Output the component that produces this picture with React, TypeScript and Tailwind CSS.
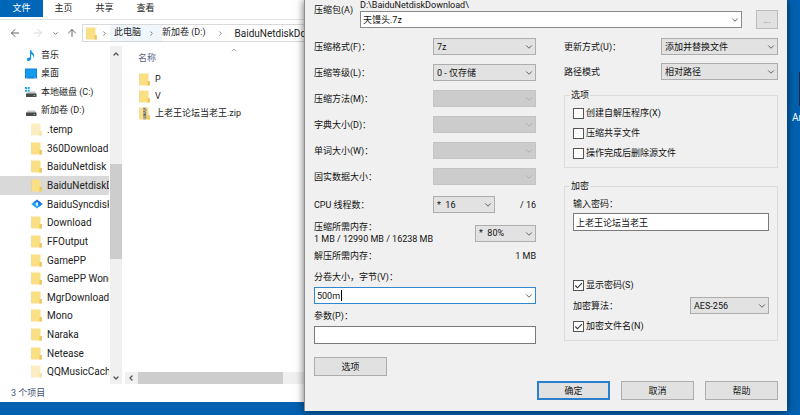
import { useState } from 'react';
import type { ReactNode } from 'react';
import { ArrowLeft, ArrowRight, ArrowUp, ChevronDown, ChevronLeft, ChevronRight, ChevronUp } from 'lucide-react';

const treeItems = [
  { name: '音乐', icon: 'music', level: 1 },
  { name: '桌面', icon: 'desktop', level: 1 },
  { name: '本地磁盘 (C:)', icon: 'system', level: 1 },
  { name: '新加卷 (D:)', icon: 'drive', level: 1 },
  { name: '.temp', icon: 'faded', level: 2 },
  { name: '360Download', icon: 'folder', level: 2 },
  { name: 'BaiduNetdisk', icon: 'folder', level: 2 },
  { name: 'BaiduNetdiskDownload', icon: 'folder', level: 2, selected: true },
  { name: 'BaiduSyncdisk', icon: 'sync', level: 2 },
  { name: 'Download', icon: 'folder', level: 2 },
  { name: 'FFOutput', icon: 'folder', level: 2 },
  { name: 'GamePP', icon: 'folder', level: 2 },
  { name: 'GamePP Wonder', icon: 'folder', level: 2 },
  { name: 'MgrDownload', icon: 'folder', level: 2 },
  { name: 'Mono', icon: 'folder', level: 2 },
  { name: 'Naraka', icon: 'folder', level: 2 },
  { name: 'Netease', icon: 'folder', level: 2 },
  { name: 'QQMusicCache', icon: 'faded', level: 2 },
];

const files = [
  { name: 'P', icon: 'folder' },
  { name: 'V', icon: 'folder' },
  { name: '上老王论坛当老王.zip', icon: 'zip' },
];

const disabledFields = ['压缩方法(M)：', '字典大小(D)：', '单词大小(W)：', '固实数据大小：'];

function FileIcon({ type }: { type: string }) {
  if (type === 'music') {
    return (
      <svg viewBox="0 0 12 13" className="h-[13px] w-3 shrink-0">
        <path d="M5 1h1c.3 2.200 3.600 3 3.200 6.300-.1.700-.4 1.200-.7 1.600.3-2-.8-3.200-2.400-3.700v4.600c0 1.300-1.100 2.200-2.400 2.200C2.500 12 1.800 11.300 1.800 10.500 1.800 9.300 3.100 8.400 5 8.600z" fill="#1595e6" />
      </svg>
    );
  }
  if (type === 'desktop') {
    return (
      <svg viewBox="0 0 12 11" className="h-[11px] w-3 shrink-0">
        <rect x="0" y="0.500" width="12" height="10" fill="#1478c8" />
        <rect x="0.700" y="1.200" width="10.600" height="8" fill="#139bf0" />
        <path d="M1 9.800h1.500M9 9.800h2" stroke="#bfe3fa" strokeWidth="0.600" />
      </svg>
    );
  }
  if (type === 'system' || type === 'drive') {
    return (
      <svg viewBox="0 0 12 11" className="h-[11px] w-3 shrink-0">
        {type === 'system' && <path d="M0 0h2v2H0zM2.700 0h2v2h-2zM0 2.700h2v2H0zM2.700 2.700h2v2h-2z" fill="#1aa7e8" />}
        <path d="M3 4.500h7L11.500 7H1z" fill="#c4c6c8" />
        <rect x="1" y="6.500" width="10.500" height="3.500" rx="0.500" fill="#484b4e" />
        <rect x="8.500" y="8" width="1.500" height="0.800" fill="#9fd39f" />
      </svg>
    );
  }
  if (type === 'sync') {
    return (
      <svg viewBox="0 0 12 12" className="h-3 w-3 shrink-0">
        <path d="M0.300 6 3.500 3.200 6.500 6 3.500 8.800z" fill="#25a9f5" />
        <path d="M5.500 6 8.500 3.200 11.700 6 8.500 8.800z" fill="#1479e8" />
        <path d="M3 4 6 1.500 9 4 7.500 5.300 6 4 4.500 5.300z" fill="#1b6fe0" />
        <path d="M3 8 6 10.500 9 8 7.500 6.700 6 8 4.500 6.700z" fill="#25a9f5" />
        <path d="M6 4.600 7.500 6 6 7.400 4.500 6z" fill="#fff" />
      </svg>
    );
  }
  return (
    <svg viewBox="0 0 12 13" className={`h-[13px] w-3 shrink-0 ${type === 'faded' ? 'opacity-50' : ''}`}>
      <path d="M0.500 0.500h9v8h1.300v4H1.200L0.500 12z" fill="#fadf85" />
      <path d="M9 8h1.800v4.500H8.400V9z" fill="#edc65b" />
      <path d="M0.500 0.500V12l.7.500" fill="none" stroke="#efd06e" strokeWidth="0.600" />
      {type === 'zip' && (
        <>
          <rect x="4" y="0.500" width="3.500" height="12" fill="#b9b29a" />
          <path d="M4.500 1.500h1.300M5.800 3h1.300M4.500 4.500h1.300M5.800 6h1.300M4.500 9h1.300M5.800 10.500h1.300" stroke="#5f6269" strokeWidth="0.900" />
          <rect x="4.600" y="6.700" width="2.300" height="2" fill="#686d78" />
        </>
      )}
    </svg>
  );
}

function Select({ id, value, label, className = '', disabled = false }: { id?: string; value?: string; label?: string; className?: string; disabled?: boolean }) {
  return (
    <div className={`relative h-[17px] ${className}`}>
      <select
        id={id}
        aria-label={label}
        disabled={disabled}
        className={`block h-full w-full appearance-none border px-[3px] leading-[14px] ${
          disabled ? 'border-[#c4c4c4] bg-[#cccccc]' : 'border-[#adadad] bg-[#e2e2e2]'
        }`}
      >
        <option>{value}</option>
      </select>
      <ChevronDown
        size={10}
        strokeWidth={2}
        className={`pointer-events-none absolute top-1 right-[2px] ${disabled ? 'text-[#aaaaaa]' : 'text-[#444444]'}`}
      />
    </div>
  );
}

function ComboBox({ id, initial, focused = false }: { id: string; initial: string; focused?: boolean }) {
  const [value, setValue] = useState(initial);

  return (
    <div className="relative h-[17px] flex-1">
      <input
        id={id}
        value={value}
        onChange={(e) => setValue(e.target.value)}
        className={`block h-full w-full border bg-white px-[2px] outline-none ${focused ? 'border-[#2f86d1]' : 'border-[#8a8a8a]'}`}
      />
      <ChevronDown size={10} strokeWidth={2} className="pointer-events-none absolute top-1 right-[2px] text-[#444444]" />
      {focused && <span className="absolute top-[3px] left-[27px] h-[11px] w-px bg-black" />}
    </div>
  );
}

function Checkbox({ label, initial = false }: { label: string; initial?: boolean }) {
  const [checked, setChecked] = useState(initial);

  return (
    <label className="flex h-3 items-center gap-[2px]">
      <span className="relative flex h-[11px] w-[11px] shrink-0">
        <input
          type="checkbox"
          checked={checked}
          onChange={() => setChecked(!checked)}
          className="h-full w-full appearance-none border border-[#555555] bg-white"
        />
        {checked && (
          <svg viewBox="0 0 11 11" className="pointer-events-none absolute inset-0">
            <path d="M2.300 5.500 4.500 7.800 8.900 3.200" fill="none" stroke="#333333" strokeWidth="1.100" />
          </svg>
        )}
      </span>
      {label}
    </label>
  );
}

function DialogButton({ children, primary = false }: { children: ReactNode; primary?: boolean }) {
  return (
    <button
      className={`h-[19px] w-[73px] bg-[#e1e1e1] leading-[14px] ${primary ? 'border-2 border-[#2b7fcb]' : 'border border-[#adadad]'}`}
    >
      {children}
    </button>
  );
}

function Explorer() {
  return (
    <section className="absolute top-0 bottom-[13px] left-0 flex w-1/2 flex-col bg-white font-[Roboto,'Noto_Sans_CJK_SC',sans-serif] text-[9px] text-[#222222]">
      <nav className="flex h-[20px] items-start border-b border-[#e3e3e3] leading-[17px]">
        <button className="h-[17px] w-[43px] bg-[#0067b8] text-white">文件</button>
        <button className="w-[41px]">主页</button>
        <button className="w-[41px]">共享</button>
        <button className="w-[41px]">查看</button>
      </nav>
      <div className="mt-1 flex h-[18px] items-center">
        <div className="flex w-[82px] items-center pl-[9px] text-[#666666]">
          <ArrowLeft size={12} strokeWidth={2} />
          <ArrowRight size={12} strokeWidth={2} className="ml-[11px] text-[#d8d8d8]" />
          <ChevronDown size={7} strokeWidth={3} className="ml-2" />
          <ArrowUp size={12} strokeWidth={2} className="ml-[7px]" />
        </div>
        <div className="flex h-full flex-1 items-center overflow-hidden border border-r-0 border-[#d9d9d9] whitespace-nowrap">
          <span className="flex w-[27px] shrink-0 items-center justify-between pr-[2px] pl-[3px]">
            <FileIcon type="folder" />
            <ChevronRight size={7} strokeWidth={3} className="text-[#777777]" />
          </span>
          <span className="flex h-full items-center bg-[#eff7fd] pl-1">
            此电脑
            <ChevronRight size={7} strokeWidth={3} className="mx-[7px] text-[#777777]" />
          </span>
          <span>新加卷 (D:)</span>
          <ChevronRight size={7} strokeWidth={3} className="mx-[11px] text-[#777777]" />
          <span className="text-[10px]">BaiduNetdiskDownload</span>
        </div>
      </div>
      <div className="mt-1 flex min-h-0 flex-1">
        <ul className="flex w-[109px] flex-col pb-[3px]">
          {treeItems.map((item) => (
            <li
              key={item.name}
              className={`flex flex-1 items-center gap-1 overflow-hidden whitespace-nowrap ${
                item.level === 1 ? 'pl-[25px]' : 'pl-[31px] text-[10px]'
              } ${item.selected ? 'bg-[#d9d9d9]' : ''}`}
            >
              <FileIcon type={item.icon} />
              {item.name}
            </li>
          ))}
        </ul>
        <div className="ml-px flex w-3 flex-col items-center bg-[#f0f0f0] text-[#555555]">
          <div className="flex h-[35%] items-start pt-1">
            <ChevronUp size={8} strokeWidth={4} />
          </div>
          <div className="h-[28%] w-full bg-[#cdcdcd]" />
          <div className="flex flex-1 items-end pb-[2px]">
            <ChevronDown size={8} strokeWidth={4} />
          </div>
        </div>
        <div className="ml-[3px] flex min-w-0 flex-1 flex-col">
          <div className="flex h-[25px] pl-[13px]">
            <span className="w-[92px] leading-6 text-[#5a6a85]">名称</span>
            <ChevronUp size={8} strokeWidth={2} className="text-[#888888]" />
          </div>
          <ul className="pl-[14px]">
            {files.map((file) => (
              <li key={file.name} className="flex h-[17px] items-center gap-1">
                <FileIcon type={file.icon} />
                {file.name}
              </li>
            ))}
          </ul>
          <div className="mt-auto flex h-3 items-center bg-[#f0f0f0]">
            <ChevronLeft size={8} strokeWidth={4} className="ml-[2px] text-[#555555]" />
            <div className="ml-[3px] h-full w-[145px] bg-[#cdcdcd]" />
          </div>
        </div>
      </div>
      <footer className="h-[18px] pl-[11px] leading-[18px] text-[#43536f]">3 个项目</footer>
    </section>
  );
}

function ArchiveDialog() {
  const [password, setPassword] = useState('上老王论坛当老王');
  const [params, setParams] = useState('');

  return (
    <form
      onSubmit={(e) => e.preventDefault()}
      className="absolute top-0 right-[13px] left-[38%] border-l border-[#8c8c8c] bg-[#f0f0f0] px-[9px] pb-[11px] font-[Roboto,'Noto_Sans_CJK_SC',sans-serif] text-[9px] leading-3 text-[#111111] shadow-[0_0_8px_rgba(0,0,0,0.6)]"
    >
      <div className="flex h-7 items-start">
        <label htmlFor="archive" className="w-[46px] pt-1">压缩包(A)</label>
        <div className="flex-1">
          <div className="h-[11px] leading-[10px]">D:\BaiduNetdiskDownload\</div>
          <div className="flex">
            <ComboBox id="archive" initial="天馒头.7z" />
          </div>
        </div>
        <button className="mt-[10px] ml-[14px] h-[19px] w-[22px] border border-[#bcbcbc] bg-[#e1e1e1] text-[#777777]">...</button>
      </div>

      <div className="mt-[10px] grid grid-cols-[222fr_214fr] gap-x-7">
        <div>
          <div className="flex flex-col gap-[9px]">
            <div className="flex items-center justify-between">
              <label htmlFor="format">压缩格式(F)：</label>
              <Select id="format" value="7z" className="w-[103px]" />
            </div>
            <div className="flex items-center justify-between">
              <label htmlFor="level">压缩等级(L)：</label>
              <Select id="level" value="0 - 仅存储" className="w-[103px]" />
            </div>
            {disabledFields.map((field) => (
              <div key={field} className="flex items-center justify-between">
                <label htmlFor={field}>{field}</label>
                <Select id={field} className="w-[103px]" disabled />
              </div>
            ))}
          </div>
          <div className="mt-[11px] flex items-center justify-between">
            <label htmlFor="threads">CPU 线程数：</label>
            <div className="flex w-[103px] items-center justify-between">
              <Select id="threads" value={'*\u00a0\u00a016'} className="w-[62px]" />
              <span>/ 16</span>
            </div>
          </div>
          <div className="mt-2 flex items-center justify-between">
            <div>
              <p>压缩所需内存：</p>
              <p>1 MB / 12990 MB / 16238 MB</p>
            </div>
            <Select label="压缩所需内存" value={'*\u00a0\u00a080%'} className="w-[61px]" />
          </div>
          <div className="mt-[5px] flex justify-between">
            <span>解压所需内存：</span>
            <span>1 MB</span>
          </div>
          <label htmlFor="volume" className="mt-[9px] block">分卷大小，字节(V)：</label>
          <div className="mt-1 flex">
            <ComboBox id="volume" initial="500m" focused />
          </div>
          <label htmlFor="params" className="mt-[6px] block">参数(P)：</label>
          <input
            id="params"
            value={params}
            onChange={(e) => setParams(e.target.value)}
            className="mt-1 block h-[18px] w-full border border-[#7a7a7a] bg-white px-[3px]"
          />
          <div className="mt-[13px] flex">
            <DialogButton>选项</DialogButton>
          </div>
        </div>

        <div>
          <div className="flex items-center justify-between">
            <label htmlFor="update">更新方式(U)：</label>
            <Select id="update" value="添加并替换文件" className="w-[117px]" />
          </div>
          <div className="mt-2 flex items-center justify-between">
            <label htmlFor="path">路径模式</label>
            <Select id="path" value="相对路径" className="w-[117px]" />
          </div>
          <fieldset className="mt-[9px] border border-[#dcdcdc] px-2 pb-2">
            <legend className="ml-[-3px] px-px">选项</legend>
            <div className="mt-[6px] flex flex-col gap-2">
              <Checkbox label="创建自解压程序(X)" />
              <Checkbox label="压缩共享文件" />
              <Checkbox label="操作完成后删除源文件" />
            </div>
          </fieldset>
          <fieldset className="mt-3 border border-[#dcdcdc] px-2 pb-2">
            <legend className="ml-[-3px] px-px">加密</legend>
            <label htmlFor="password" className="mt-[6px] block">输入密码：</label>
            <input
              id="password"
              value={password}
              onChange={(e) => setPassword(e.target.value)}
              className="mt-[3px] mb-12 block h-[18px] w-full border border-[#7a7a7a] bg-white px-[2px]"
            />
            <Checkbox label="显示密码(S)" initial />
            <div className="my-[6px] flex items-center justify-between">
              <label htmlFor="cipher">加密算法：</label>
              <Select id="cipher" value="AES-256" className="w-[79px]" />
            </div>
            <Checkbox label="加密文件名(N)" initial />
          </fieldset>
        </div>
      </div>

      <div className="mt-[5px] flex justify-end gap-[11px]">
        <DialogButton primary>确定</DialogButton>
        <DialogButton>取消</DialogButton>
        <DialogButton>帮助</DialogButton>
      </div>
    </form>
  );
}

export default function App() {
  return (
    <main className="relative min-h-screen overflow-hidden bg-[#0061b0]">
      <div className="absolute top-[72px] left-[calc(100%-8px)] flex w-8 flex-col items-end font-[Roboto,sans-serif] text-[10px] text-white">
        <div className="h-[34px] w-[25px] bg-[#1c2a3e]" />
        <span className="w-full leading-6">Ar</span>
      </div>
      <Explorer />
      <ArchiveDialog />
    </main>
  );
}
